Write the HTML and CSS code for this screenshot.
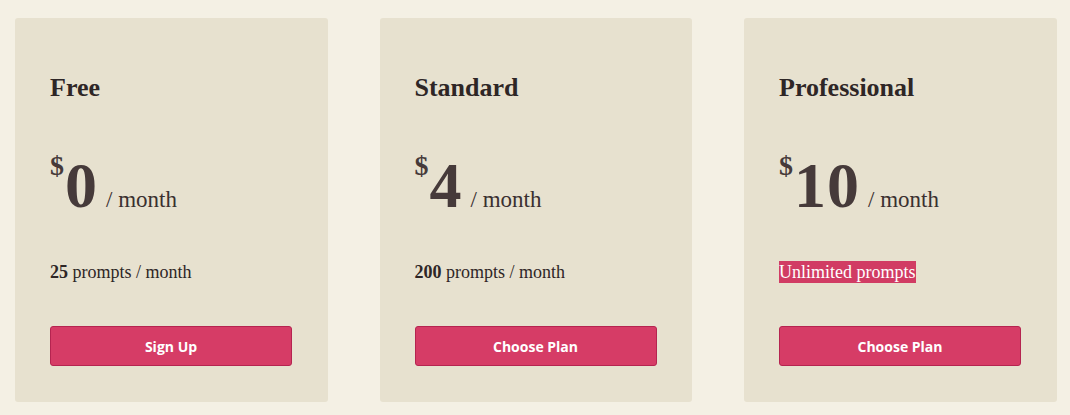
FILE: index.html
```html
<!DOCTYPE html>
<html lang="en">
<head>
    <meta charset="UTF-8">
    <title>Pricing</title>
    <link rel="stylesheet" href="styles.css">
</head>
<body>
    <div class="plans">
        <div class="plan">
            <h2 class="plan-name">Free</h2>
            <div class="price"><span class="cur">$</span><span class="amount">0</span><span class="per">/ month</span></div>
            <p class="quota"><b>25</b> prompts / month</p>
            <a class="btn">Sign Up</a>
        </div>
        <div class="plan">
            <h2 class="plan-name">Standard</h2>
            <div class="price"><span class="cur">$</span><span class="amount">4</span><span class="per">/ month</span></div>
            <p class="quota"><b>200</b> prompts / month</p>
            <a class="btn">Choose Plan</a>
        </div>
        <div class="plan">
            <h2 class="plan-name">Professional</h2>
            <div class="price"><span class="cur">$</span><span class="amount">10</span><span class="per">/ month</span></div>
            <p class="quota"><mark>Unlimited prompts</mark></p>
            <a class="btn">Choose Plan</a>
        </div>
    </div>
</body>
</html>
```

FILE: styles.css
```css
*{
    margin: 0;
    padding: 0;
    box-sizing: border-box;
}
body{
    background: #f4f0e4;
    font-family: "Liberation Serif", serif;
    color: #2e2626;
    padding: 18px 13px 13px 15px;
}
.plans{
    display: flex;
    gap: 52px;
}
.plan{
    width: 312.5px;
    height: 384px;
    background: #e7e1cf;
    border-radius: 3px;
    padding: 54px 36px 0 35px;
    display: flex;
    flex-direction: column;
}
.plan-name{
    font-size: 26px;
    font-weight: bold;
    line-height: 32px;
}
.price{
    margin-top: 47px;
    display: flex;
    align-items: baseline;
    color: #463a3a;
    height: 70px;
}
.price .cur{
    font-size: 28px;
    font-weight: bold;
    align-self: flex-start;
    line-height: 30px;
    margin-right: 1px;
}
.price .amount{
    font-size: 64px;
    font-weight: bold;
    line-height: 70px;
    letter-spacing: 1px;
}
.price .per{
    font-size: 23px;
    margin-left: 8px;
    color: #3a3030;
}
.quota{
    margin-top: 39px;
    font-size: 18px;
    line-height: 24px;
}
.quota b{
    font-weight: bold;
}
.quota mark{
    background: #d13c64;
    color: #fff;
    padding: 1px 0;
}
.btn{
    display: flex;
    align-items: center;
    justify-content: center;
    margin-top: 42px;
    width: 242px;
    height: 40px;
    background: #d63c66;
    border: 1px solid #b52450;
    border-radius: 3px;
    color: #fff;
    font-family: "Open Sans", sans-serif;
    font-weight: bold;
    font-size: 14px;
    cursor: pointer;
}
```
